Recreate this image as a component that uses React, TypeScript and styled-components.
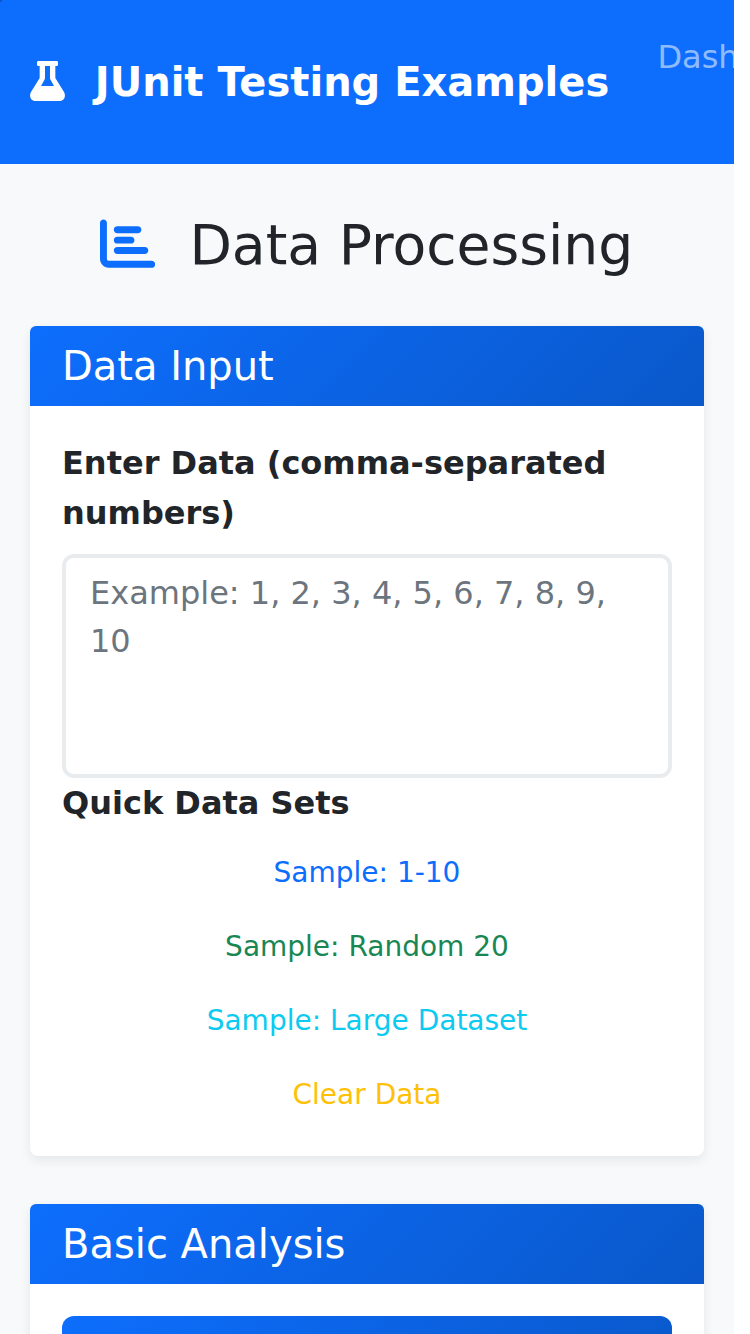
import React from "react";
import styled, { createGlobalStyle } from "styled-components";
import { FaChartBar } from "react-icons/fa6";

const GlobalStyle = createGlobalStyle`
  *, *::before, *::after { box-sizing: border-box; }
  html, body { margin: 0; height: 1334px; overflow: hidden; background: #fff; }
  body { font-family: "DejaVu Sans", sans-serif; font-size: 32px; line-height: 50px; color: #212529; }
`;

const gradient = "linear-gradient(135deg, #0d6efd 0%, #0a58ca 100%)";

const Page = styled.div`
  width: 734px;
  height: 1334px;
  overflow: hidden;
  background: #f8f9fa;
`;

const CornerMark = styled.span`
  position: absolute;
  top: 0;
  left: 0;
  width: 2px;
  height: 2px;
  background: #0a58ca;
`;

const Navbar = styled.nav`
  display: flex;
  align-items: flex-start;
  height: 164px;
  padding: 0 30px;
  background: #0d6efd;
  overflow: hidden;
  white-space: nowrap;
`;

const Brand = styled.a`
  display: flex;
  align-items: center;
  flex: none;
  width: 627.4px;
  height: 60px;
  margin-top: 52px;
  color: #fff;
  font-size: 40px;
  font-weight: 700;
  line-height: 60px;
`;

const Flask = styled.svg`
  width: 35px;
  height: 40px;
  margin: -2px 29.8px 0 0;
  fill: currentColor;
`;

const NavLink = styled.a`
  flex: none;
  margin-top: 32px;
  line-height: 50px;
  color: rgba(255, 255, 255, 0.55);
`;

const PageTitle = styled.h1`
  display: flex;
  align-items: center;
  justify-content: center;
  height: 68px;
  margin: 46px 0 48px;
  padding-top: 2px;
  font-size: 55.2px;
  font-weight: 400;
  line-height: 66px;

  svg {
    margin: -3.8px 34.4px 0 -0.8px;
    width: 55.2px;
    height: 55.2px;
    color: #0d6efd;
  }
`;

const Card = styled.section`
  margin: 0 30px 48px;
  border-radius: 8px;
  background: #fff;
  box-shadow: 0 4px 12px rgba(0, 0, 0, 0.08);
`;

const CardHeader = styled.h2`
  height: 80px;
  margin: 0;
  padding: 16px 32px;
  border-radius: 6px 6px 0 0;
  background: ${gradient};
  color: #fff;
  font-size: 40px;
  font-weight: 400;
  line-height: 48px;
`;

const CardBody = styled.div`
  padding: 32px;
`;

const Label = styled.label`
  display: block;
  margin-bottom: 16px;
  font-weight: 700;
`;

const DataField = styled.textarea`
  display: block;
  width: 100%;
  height: 224px;
  padding: 11px 24px 13px;
  border: 4px solid #e9ecef;
  border-radius: 12px;
  background: #fff;
  font: inherit;
  line-height: 48px;
  resize: none;
  overflow: hidden;

  &::placeholder { color: #6c757d; opacity: 1; }
`;

const SampleList = styled.div`
  display: grid;
  gap: 16px;
`;

const SampleButton = styled.button<{ $color: string }>`
  height: 58px;
  padding: 0;
  border: 0;
  background: transparent;
  color: ${({ $color }) => $color};
  font-family: inherit;
  font-size: 28px;
  line-height: 42px;
`;

const ActionButton = styled.button`
  display: block;
  width: 100%;
  height: 76px;
  border: 0;
  border-radius: 12px;
  background: ${gradient};
`;

const samples = [
  { label: "Sample: 1-10", color: "#0d6efd" },
  { label: "Sample: Random 20", color: "#198754" },
  { label: "Sample: Large Dataset", color: "#0dcaf0" },
  { label: "Clear Data", color: "#ffc107" },
];

export default function App() {
  return (
    <Page>
      <GlobalStyle />
      <Navbar>
        <Brand>
          <Flask viewBox="0 0 105 120">
            <path
              fillRule="evenodd"
              d="M25 0H80Q84 0 84 4V11Q84 15 80 15H76V51L102 93C109 106 102 120 89 120H16C3 120 -4 106 3 93L29 51V15H25Q21 15 21 11V4Q21 0 25 0ZM45 15V50Q45 54 43 57L33 75H72L62 57Q60 54 60 50V15Z"
            />
          </Flask>
          JUnit Testing Examples
        </Brand>
        <NavLink>Dashboard</NavLink>
      </Navbar>
      <CornerMark />
      <PageTitle>
        <FaChartBar />
        Data Processing
      </PageTitle>
      <Card>
        <CardHeader>Data Input</CardHeader>
        <CardBody>
          <Label htmlFor="data">Enter Data (comma-separated numbers)</Label>
          <DataField id="data" placeholder="Example: 1, 2, 3, 4, 5, 6, 7, 8, 9, 10" />
          <Label as="div">Quick Data Sets</Label>
          <SampleList>
            {samples.map((sample) => (
              <SampleButton key={sample.label} $color={sample.color}>{sample.label}</SampleButton>
            ))}
          </SampleList>
        </CardBody>
      </Card>
      <Card>
        <CardHeader>Basic Analysis</CardHeader>
        <CardBody>
          <ActionButton />
        </CardBody>
      </Card>
    </Page>
  );
}
